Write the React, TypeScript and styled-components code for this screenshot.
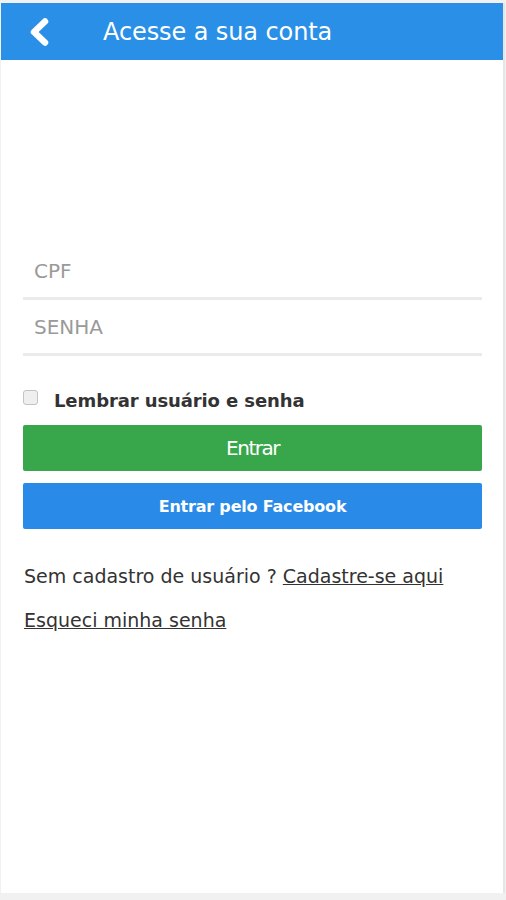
import React from "react";
import styled, { createGlobalStyle } from "styled-components";

const Global = createGlobalStyle`
  html, body { margin: 0; padding: 0; background: #f1f1f1; }
  body { font-family: "DejaVu Sans", Verdana, sans-serif; }
`;

const Frame = styled.div`
  width: 502px;
  height: 890px;
  margin: 3px 0 0 1px;
  background: #ffffff;
  border-right: 2px solid #e6e6e6;
  display: flex;
  flex-direction: column;
`;

const Header = styled.header`
  height: 57px;
  background: #2a8fe6;
  display: flex;
  align-items: center;
  padding-left: 25px;
`;

const BackButton = styled.button`
  border: 0;
  background: none;
  padding: 0;
  width: 26px;
  height: 30px;
  display: flex;
  align-items: center;
  justify-content: center;
  cursor: pointer;
`;

const Title = styled.h1`
  margin: 0 0 0 51px;
  font-family: "DejaVu Sans", Verdana, sans-serif;
  font-weight: 400;
  font-size: 24px;
  color: #ffffff;
  letter-spacing: -0.1px;
`;

const Content = styled.main`
  padding: 184px 21px 0 22px;
  display: flex;
  flex-direction: column;
`;

const Field = styled.input`
  height: 53px;
  border: 0;
  border-bottom: 3px solid #ebebeb;
  padding: 0 0 0 11px;
  box-sizing: content-box;
  font-family: "DejaVu Sans", Verdana, sans-serif;
  font-size: 20px;
  color: #333;
  outline: none;
  background: transparent;
  &::placeholder { color: #9a9a9a; }
`;

const RememberRow = styled.label`
  margin-top: 33px;
  height: 22px;
  display: flex;
  align-items: center;
  gap: 16px;
  font-size: 18px;
  font-weight: 700;
  color: #333;
  letter-spacing: -0.1px;
`;

const Check = styled.span`
  width: 13px;
  height: 13px;
  margin-top: -6px;
  border: 1px solid #c4c4c4;
  border-radius: 3px;
  background: #efefef;
`;

const Button = styled.button<{ $color: string; $size: number; $weight: number; $top: number; $spacing: number }>`
  height: 46px;
  border: 0;
  border-radius: 2px;
  background: ${(p) => p.$color};
  color: #ffffff;
  font-family: "DejaVu Sans", Verdana, sans-serif;
  font-size: ${(p) => p.$size}px;
  font-weight: ${(p) => p.$weight};
  letter-spacing: ${(p) => p.$spacing}px;
  cursor: pointer;
  margin-top: ${(p) => p.$top}px;
  padding: 0;
`;

const Line = styled.p<{ $top: number }>`
  margin: ${(p) => p.$top}px 0 0 1px;
  font-size: 19px;
  line-height: 22px;
  color: #333;
`;

const Link = styled.a`
  color: #333;
  text-decoration: underline;
`;

export default function App() {
  return (
    <>
      <Global />
      <Frame>
        <Header>
          <BackButton aria-label="Voltar">
            <svg width="22" height="28" viewBox="0 0 22 28">
              <path d="M17 3.5 L6 14 L17 24.5" fill="none" stroke="#fff" strokeWidth="6.5" strokeLinecap="round" strokeLinejoin="round" />
            </svg>
          </BackButton>
          <Title>Acesse a sua conta</Title>
        </Header>
        <Content>
          <Field placeholder="CPF" />
          <Field placeholder="SENHA" type="password" />
          <RememberRow>
            <Check />
            Lembrar usuário e senha
          </RememberRow>
          <Button $color="#38a64b" $size={20} $weight={400} $top={14} $spacing={-1.5}>Entrar</Button>
          <Button $color="#2a8ae8" $size={16} $weight={700} $top={12} $spacing={-0.2}>Entrar pelo Facebook</Button>
          <Line $top={36}>
            Sem cadastro de usuário ? <Link href="#">Cadastre-se aqui</Link>
          </Line>
          <Line $top={22}>
            <Link href="#">Esqueci minha senha</Link>
          </Line>
        </Content>
      </Frame>
    </>
  );
}
